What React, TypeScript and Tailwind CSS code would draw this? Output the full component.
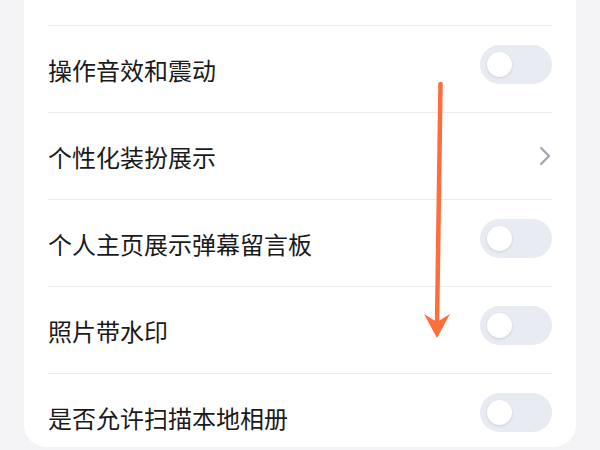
type Row = { label: string; kind: "toggle" | "link" };

const rows: Row[] = [
  { label: "操作音效和震动", kind: "toggle" },
  { label: "个性化装扮展示", kind: "link" },
  { label: "个人主页展示弹幕留言板", kind: "toggle" },
  { label: "照片带水印", kind: "toggle" },
  { label: "是否允许扫描本地相册", kind: "toggle" },
];

function Toggle() {
  return (
    <div className="flex h-[39px] w-[72px] items-center rounded-full bg-[#e9ebf3] px-[7px]">
      <div className="h-[25px] w-[25px] rounded-full bg-white shadow-[0_1px_3px_rgba(0,0,0,0.12)]" />
    </div>
  );
}

function Chevron() {
  return (
    <svg width="12" height="20" viewBox="0 0 12 20" className="mr-[1px] mt-[33px]">
      <path
        d="M2 2 L10 10 L2 18"
        fill="none"
        stroke="#9ca1ac"
        strokeWidth="2"
        strokeLinecap="round"
        strokeLinejoin="round"
      />
    </svg>
  );
}

export default function App() {
  return (
    <div
      className="relative h-[450px] w-[600px] overflow-hidden bg-[#f4f4f6]"
      style={{ fontFamily: '"Noto Sans CJK SC", "Noto Sans", sans-serif' }}
    >
      <div className="mx-[24px] -mt-[20px] rounded-b-[22px] bg-white px-[24px] pt-[45px]">
        {rows.map((r, i) => (
          <div
            key={r.label}
            className={`flex items-start justify-between border-t border-[#ebebeb] ${
              i === rows.length - 1 ? "h-[74px]" : "h-[87px]"
            }`}
          >
            <span className="mt-[28px] text-[24px] leading-[32px] text-[#1a1a1a]">
              {r.label}
            </span>
            {r.kind === "toggle" ? (
              <div className="mt-[19px]">
                <Toggle />
              </div>
            ) : (
              <Chevron />
            )}
          </div>
        ))}
      </div>

      <svg
        className="absolute left-0 top-0"
        width="600"
        height="450"
        viewBox="0 0 600 450"
      >
        <line
          x1="440.5"
          y1="84"
          x2="437"
          y2="325"
          stroke="#ff6d3b"
          strokeWidth="4.5"
          strokeLinecap="round"
        />
        <path d="M424 314 L437 338 L450 314 L437 322 Z" fill="#ff6d3b" />
      </svg>
    </div>
  );
}
